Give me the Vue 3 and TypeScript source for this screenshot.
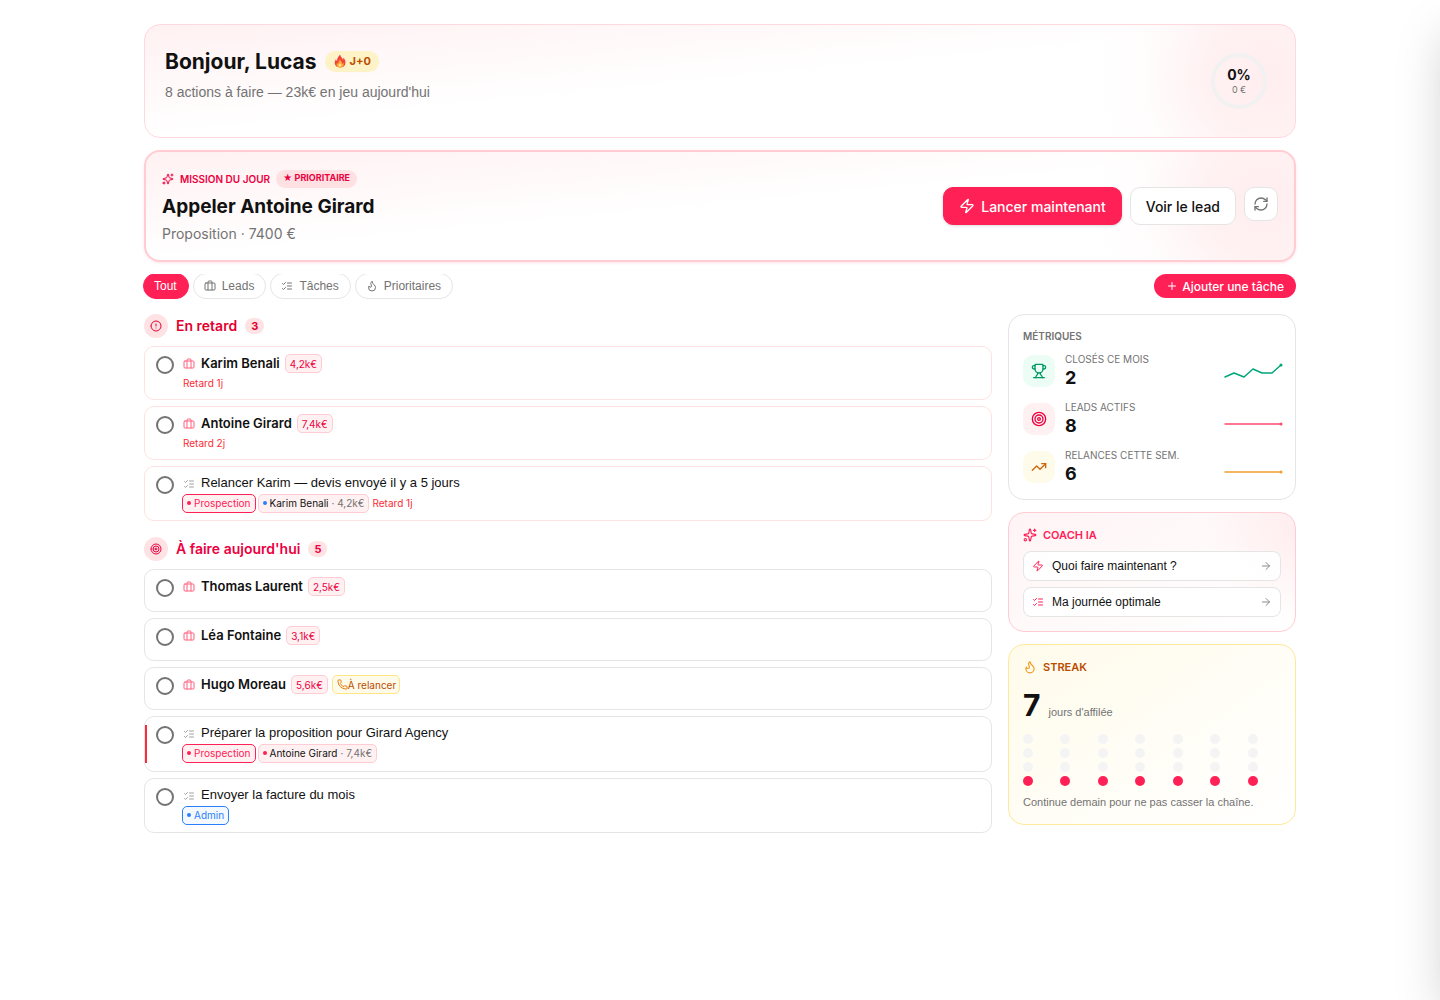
<script setup lang="ts">
import { h, ref, type FunctionalComponent } from 'vue'

const paths: Record<string, string[]> = {
  sparkles: [
    'M11.017 2.814a1 1 0 0 1 1.966 0l1.051 5.558a2 2 0 0 0 1.594 1.594l5.558 1.051a1 1 0 0 1 0 1.966l-5.558 1.051a2 2 0 0 0-1.594 1.594l-1.051 5.558a1 1 0 0 1-1.966 0l-1.051-5.558a2 2 0 0 0-1.594-1.594l-5.558-1.051a1 1 0 0 1 0-1.966l5.558-1.051a2 2 0 0 0 1.594-1.594z',
    'M20 2v4', 'M22 4h-4', 'M2 20a2 2 0 1 0 4 0a2 2 0 1 0-4 0',
  ],
  zap: ['M4 14a1 1 0 0 1-.78-1.63l9.9-10.2a.5.5 0 0 1 .86.46l-1.92 6.02A1 1 0 0 0 13 10h7a1 1 0 0 1 .78 1.63l-9.9 10.2a.5.5 0 0 1-.86-.46l1.92-6.02A1 1 0 0 0 11 14z'],
  refresh: ['M3 12a9 9 0 0 1 9-9 9.75 9.75 0 0 1 6.74 2.74L21 8', 'M21 3v5h-5', 'M21 12a9 9 0 0 1-9 9 9.75 9.75 0 0 1-6.74-2.74L3 16', 'M8 16H3v5'],
  briefcase: ['M16 20V4a2 2 0 0 0-2-2h-4a2 2 0 0 0-2 2v16', 'M4 6h16a2 2 0 0 1 2 2v10a2 2 0 0 1-2 2H4a2 2 0 0 1-2-2V8a2 2 0 0 1 2-2z'],
  list: ['m3 17 2 2 4-4', 'm3 7 2 2 4-4', 'M13 6h8', 'M13 12h8', 'M13 18h8'],
  flame: ['M12 3q1 4 4 6.5t3 5.5a1 1 0 0 1-14 0 5 5 0 0 1 1-3 1 1 0 0 0 5 0c0-2-1.5-3-1.5-5q0-2 2.5-4'],
  alert: ['M2 12a10 10 0 1 0 20 0a10 10 0 1 0-20 0', 'M12 8v4', 'M12 16h.01'],
  target: ['M2 12a10 10 0 1 0 20 0a10 10 0 1 0-20 0', 'M6 12a6 6 0 1 0 12 0a6 6 0 1 0-12 0', 'M10 12a2 2 0 1 0 4 0a2 2 0 1 0-4 0'],
  trophy: [
    'M10 14.66v1.626a2 2 0 0 1-.976 1.696A5 5 0 0 0 7 21.978', 'M14 14.66v1.626a2 2 0 0 0 .976 1.696A5 5 0 0 1 17 21.978',
    'M18 9h1.5a1 1 0 0 0 0-5H18', 'M4 22h16', 'M6 9a6 6 0 0 0 12 0V3a1 1 0 0 0-1-1H7a1 1 0 0 0-1 1z', 'M6 9H4.5a1 1 0 0 1 0-5H6',
  ],
  trend: ['M16 7h6v6', 'm22 7-8.5 8.5-5-5L2 17'],
  arrow: ['M5 12h14', 'm12 5 7 7-7 7'],
  plus: ['M5 12h14', 'M12 5v14'],
  phone: ['M13.832 16.568a1 1 0 0 0 1.213-.303l.355-.465A2 2 0 0 1 17 15h3a2 2 0 0 1 2 2v3a2 2 0 0 1-2 2A18 18 0 0 1 2 4a2 2 0 0 1 2-2h3a2 2 0 0 1 2 2v3a2 2 0 0 1-.8 1.6l-.468.351a1 1 0 0 0-.292 1.233 14 14 0 0 0 6.392 6.384'],
}

const Icon: FunctionalComponent<{ name: string; size: number }> = (props) =>
  h(
    'svg',
    {
      width: props.size, height: props.size, viewBox: '0 0 24 24', fill: 'none', stroke: 'currentColor',
      'stroke-width': 2, 'stroke-linecap': 'round', 'stroke-linejoin': 'round', 'aria-hidden': 'true',
    },
    paths[props.name].map((d) => h('path', { d })),
  )
Icon.props = ['name', 'size']

interface Item {
  id: string
  kind: 'lead' | 'task'
  title: string
  amount?: string
  followUp?: boolean
  category?: string
  tone?: 'rose' | 'blue'
  lead?: { name: string; amount: string; dot: 'rose' | 'blue' }
  late?: string
  priority?: boolean
}
interface Section { title: string; icon: string; late: boolean; items: Item[] }

const sections: Section[] = [
  {
    title: 'En retard', icon: 'alert', late: true,
    items: [
      { id: 'a1', kind: 'lead', title: 'Karim Benali', amount: '4,2k€', late: 'Retard 1j' },
      { id: 'a2', kind: 'lead', title: 'Antoine Girard', amount: '7,4k€', late: 'Retard 2j' },
      {
        id: 'a3', kind: 'task', title: 'Relancer Karim — devis envoyé il y a 5 jours', category: 'Prospection', tone: 'rose',
        lead: { name: 'Karim Benali', amount: '4,2k€', dot: 'blue' }, late: 'Retard 1j',
      },
    ],
  },
  {
    title: "À faire aujourd'hui", icon: 'target', late: false,
    items: [
      { id: 'b1', kind: 'lead', title: 'Thomas Laurent', amount: '2,5k€' },
      { id: 'b2', kind: 'lead', title: 'Léa Fontaine', amount: '3,1k€' },
      { id: 'b3', kind: 'lead', title: 'Hugo Moreau', amount: '5,6k€', followUp: true },
      {
        id: 'b4', kind: 'task', title: 'Préparer la proposition pour Girard Agency', category: 'Prospection', tone: 'rose',
        lead: { name: 'Antoine Girard', amount: '7,4k€', dot: 'rose' }, priority: true,
      },
      { id: 'b5', kind: 'task', title: 'Envoyer la facture du mois', category: 'Admin', tone: 'blue' },
    ],
  },
]

const filters = [
  { label: 'Tout', icon: '' },
  { label: 'Leads', icon: 'briefcase' },
  { label: 'Tâches', icon: 'list' },
  { label: 'Prioritaires', icon: 'flame' },
]
const active = ref('Tout')

const metrics = [
  { label: 'Closés ce mois', value: 2, icon: 'trophy', tone: 'green', points: [[2, 16], [11, 12], [21, 16], [30, 8], [39, 12], [49, 12], [58, 4]] },
  { label: 'Leads actifs', value: 8, icon: 'target', tone: 'rose', points: [[2, 15], [58, 15]] },
  { label: 'Relances cette sem.', value: 6, icon: 'trend', tone: 'amber', points: [[2, 15], [58, 15]] },
]
</script>

<template>
  <main class="page">
    <header class="hero glow">
      <div>
        <div class="hero-line">
          <h1>Bonjour, Lucas</h1>
          <span class="streak-pill">
            <svg width="14" height="14" viewBox="0 0 24 24" aria-hidden="true">
              <path fill="#f4433c" d="M12 1c1 4 4 5 5 9 .8-1 .8-2.500.5-4C21 9 22 13 21 17c-1 4-4 6-9 6s-8.500-2-9-7c-.3-3 1-5 2-7 .3 1.500.8 2.500 2 3C6.500 8 9 5 12 1z" />
              <path fill="#ffb02e" d="M12 9c.5 3 4 4.500 4 8.500 1-.5 1.500-1.500 1.500-3C20 19 17 23 12 23s-7-4-5-8c.5 1 1 1.500 2 2-.5-3 2-5 3-8z" />
              <path fill="#fff3c4" d="M12 16c1 1.500 2 2.500 1.500 4.500-.5 1.500-2.500 1.500-3 0-.5-1.500.5-3 1.500-4.500z" />
            </svg>
            J+0
          </span>
        </div>
        <p class="lead-text">8 actions à faire — 23k€ en jeu aujourd'hui</p>
      </div>
      <div class="ring">
        <svg width="72" height="72" viewBox="0 0 72 72" aria-hidden="true">
          <circle cx="36" cy="36" r="26" fill="none" stroke="#f2f1f1" stroke-width="4" />
        </svg>
        <div class="ring-label"><strong>0%</strong><span>0 €</span></div>
      </div>
    </header>

    <section class="mission glow">
      <div class="mission-text">
        <div class="eyebrow">
          <Icon name="sparkles" :size="12" />
          <span>MISSION DU JOUR</span>
          <span class="prio">★ PRIORITAIRE</span>
        </div>
        <h2>Appeler Antoine Girard</h2>
        <p class="stage">Proposition · 7400 €</p>
      </div>
      <div class="actions">
        <button class="btn primary" type="button"><Icon name="zap" :size="16" />Lancer maintenant</button>
        <button class="btn" type="button">Voir le lead</button>
        <button class="btn square" type="button" aria-label="Changer de mission"><Icon name="refresh" :size="16" /></button>
      </div>
    </section>

    <nav class="toolbar" aria-label="Filtres">
      <div class="chips">
        <button
          v-for="f in filters" :key="f.label" type="button" class="chip" :class="{ on: active === f.label }"
          :aria-pressed="active === f.label" @click="active = f.label"
        >
          <Icon v-if="f.icon" :name="f.icon" :size="12" />{{ f.label }}
        </button>
      </div>
      <button class="add" type="button"><Icon name="plus" :size="12" />Ajouter une tâche</button>
    </nav>

    <div class="columns">
      <div class="lists">
        <section v-for="s in sections" :key="s.title" class="group">
          <h3 :class="{ late: s.late }">
            <span class="disc"><Icon :name="s.icon" :size="12" /></span>
            <span class="group-title">{{ s.title }}</span>
            <span class="count">{{ s.items.length }}</span>
          </h3>
          <ul>
            <li v-for="it in s.items" :key="it.id" class="item" :class="{ late: s.late, priority: it.priority }">
              <input :id="it.id" type="checkbox" />
              <div class="body">
                <div class="title-row">
                  <Icon :name="it.kind === 'lead' ? 'briefcase' : 'list'" :size="12" :class="it.kind" />
                  <label :for="it.id" :class="{ strong: it.kind === 'lead' }">{{ it.title }}</label>
                  <span v-if="it.amount" class="tag amount">{{ it.amount }}</span>
                  <span v-if="it.followUp" class="tag follow"><Icon name="phone" :size="11" />À relancer</span>
                </div>
                <div v-if="it.category || it.late" class="meta" :class="{ tagged: it.category }">
                  <span v-if="it.category" class="tag category" :class="it.tone"><i class="dot"></i>{{ it.category }}</span>
                  <span v-if="it.lead" class="tag linked">
                    <i class="dot" :class="it.lead.dot"></i>{{ it.lead.name }}<em>· {{ it.lead.amount }}</em>
                  </span>
                  <span v-if="it.late" class="late-text">{{ it.late }}</span>
                </div>
              </div>
            </li>
          </ul>
        </section>
      </div>

      <aside>
        <section class="card">
          <h4>MÉTRIQUES</h4>
          <div class="metrics">
            <div v-for="m in metrics" :key="m.label" class="metric" :class="m.tone">
              <span class="tile"><Icon :name="m.icon" :size="16" /></span>
              <div class="figures">
                <span class="metric-label">{{ m.label }}</span>
                <strong>{{ m.value }}</strong>
              </div>
              <svg class="spark" width="60" height="20" viewBox="0 0 60 20" aria-hidden="true">
                <polyline :points="m.points.map((p) => p.join(',')).join(' ')" />
                <circle :cx="m.points[m.points.length - 1][0]" :cy="m.points[m.points.length - 1][1]" r="1.500" />
              </svg>
            </div>
          </div>
        </section>

        <section class="card coach">
          <h4><Icon name="sparkles" :size="14" />COACH IA</h4>
          <div class="asks">
            <button type="button"><Icon name="zap" :size="12" /><span>Quoi faire maintenant ?</span><Icon name="arrow" :size="12" /></button>
            <button type="button"><Icon name="list" :size="12" /><span>Ma journée optimale</span><Icon name="arrow" :size="12" /></button>
          </div>
        </section>

        <section class="card streak">
          <h4><Icon name="flame" :size="14" />STREAK</h4>
          <p class="days"><strong>7</strong>jours d'affilée</p>
          <div class="dots"><i v-for="n in 28" :key="n" :class="{ done: n > 21 }"></i></div>
          <p class="hint">Continue demain pour ne pas casser la chaîne.</p>
        </section>
      </aside>
    </div>
  </main>
  <div class="drawer"></div>
</template>

<style>
body {
  margin: 0;
  background: #fff;
}
</style>

<style scoped>
.page {
  box-sizing: border-box;
  max-width: 1152px;
  margin: 0 auto;
  padding: 24px 0;
  display: flex;
  flex-direction: column;
  gap: 12px;
  font-family: Inter, "Liberation Sans", sans-serif;
  color: #111;
}
.page * { box-sizing: border-box; }
h1, h2, h3, h4, p, ul { margin: 0; padding: 0; }
button { font-family: inherit; cursor: pointer; }
svg { flex: none; display: block; }
.lead-text, .chip, .title-row label, .asks button, .hint, .days {
  font-family: "Liberation Sans", Arial, sans-serif;
}
.drawer {
  position: fixed;
  top: 0;
  bottom: 0;
  left: 100%;
  width: 420px;
  box-shadow: 0 25px 50px -12px rgba(0, 0, 0, 0.25);
}
.hero {
  display: flex;
  justify-content: space-between;
  border: 1px solid #ffd9de;
  border-radius: 16px;
  padding: 20px;
}
.glow {
  background:
    radial-gradient(circle at calc(100% - 30px) 45%, rgba(255, 228, 230, 0.65) 0, rgba(255, 228, 230, 0.5) 60px, rgba(255, 228, 230, 0.1) 120px, rgba(255, 228, 230, 0) 170px),
    linear-gradient(to bottom right, #fff1f2 0%, #fff 50%);
}
.hero-line { display: flex; align-items: center; gap: 8px; height: 32px; }
h1 { padding-top: 2px; font-size: 21px; line-height: 30px; font-weight: 700; }
.streak-pill {
  display: flex;
  align-items: center;
  gap: 3px;
  height: 21px;
  padding: 0 8px;
  border-radius: 11px;
  background: #fef3c6;
  color: #bb4d00;
  font-size: 11px;
  font-weight: 700;
}
.lead-text, .stage { font-size: 14px; line-height: 20px; color: #737373; }
.lead-text { margin-top: 5px; }
.ring { position: relative; width: 72px; height: 72px; }
.ring-label {
  position: absolute;
  inset: 0;
  display: flex;
  flex-direction: column;
  align-items: center;
  justify-content: center;
  gap: 1px;
  padding-top: 1px;
}
.ring-label strong { font-size: 14px; line-height: 16px; font-weight: 700; }
.ring-label span { font-size: 9px; line-height: 12px; color: #737373; }
.mission {
  display: flex;
  align-items: center;
  justify-content: space-between;
  padding: 16px;
  border: 2px solid #ffccd3;
  border-radius: 16px;
  box-shadow: 0 1px 3px rgba(255, 32, 86, 0.12);
  background-clip: padding-box;
}
.mission-text { display: flex; flex-direction: column; gap: 4px; }
.eyebrow {
  display: flex;
  align-items: center;
  gap: 6px;
  height: 20px;
  padding-top: 2px;
  font-size: 10px;
  font-weight: 600;
  color: #ec003f;
}
.prio {
  height: 18px;
  padding: 0 7px;
  border-radius: 9px;
  background: #ffe0e3;
  font-size: 9px;
  line-height: 16px;
  font-weight: 700;
}
h2 { padding-top: 2px; font-size: 19px; line-height: 26px; font-weight: 700; }
.actions { display: flex; align-items: flex-start; gap: 8px; }
.btn {
  display: flex;
  align-items: center;
  justify-content: center;
  gap: 6px;
  height: 38px;
  padding: 0 15px;
  border: 1px solid #e5e5e5;
  border-radius: 10px;
  background: #fff;
  color: #111;
  font-size: 14px;
  font-weight: 500;
}
.btn.primary { border-color: #ff2056; background: #ff2056; color: #fff; box-shadow: 0 1px 3px rgba(0, 0, 0, 0.15); }
.btn.square { width: 34px; height: 34px; padding: 0; color: #737373; }
.toolbar { display: flex; justify-content: space-between; align-items: flex-start; }
.chips { display: flex; gap: 4px; margin-left: -1px; overflow: hidden; }
.chip {
  display: flex;
  align-items: center;
  gap: 6px;
  height: 26px;
  margin-top: -1px;
  padding: 0 11px 0 10px;
  border: 1px solid #e5e5e5;
  border-radius: 13px;
  background: #fff;
  color: #737373;
  font-size: 12px;
}
.chip.on { border-color: #ff2056; background: #ff2056; color: #fff; }
.add {
  display: flex;
  align-items: center;
  gap: 4px;
  height: 24px;
  padding: 0 12px;
  border: 0;
  border-radius: 12px;
  background: #ff2056;
  color: #fff;
  font-size: 12px;
  font-weight: 500;
}
.columns { display: grid; grid-template-columns: minmax(0, 1fr) 288px; gap: 16px; align-items: start; margin-top: 3px; }
.lists { display: flex; flex-direction: column; gap: 16px; }
h3 {
  display: flex;
  align-items: center;
  gap: 8px;
  height: 24px;
  margin-bottom: 8px;
  font-size: 14px;
  font-weight: 600;
  color: #ec003f;
}
h3.late { color: #e3002f; }
.group-title { padding-bottom: 2px; }
.disc {
  display: grid;
  place-items: center;
  width: 24px;
  height: 24px;
  border-radius: 50%;
  background: #ffe2e4;
}
.count { padding: 0 6px; border-radius: 8px; background: #ffe2e4; font-size: 11px; line-height: 16px; font-weight: 700; }
ul { list-style: none; display: flex; flex-direction: column; gap: 6px; }
.item {
  position: relative;
  display: flex;
  gap: 9px;
  min-height: 43px;
  padding: 7px 11px;
  border: 1px solid #e5e5e5;
  border-radius: 10px;
  background: #fff;
}
.item.late { border-color: #ffe2e2; }
.item.priority { min-height: 56px; }
.item.priority::before {
  content: "";
  position: absolute;
  left: 0;
  top: 8px;
  bottom: 8px;
  width: 2px;
  background: #fb2c36;
}
.item input {
  appearance: none;
  flex: none;
  width: 18px;
  height: 18px;
  margin: 2px 0 0;
  border: 2px solid #737373;
  border-radius: 50%;
}
.item input:checked { background: #ff2056; }
.body { min-width: 0; }
.title-row { display: flex; align-items: center; height: 19px; }
.title-row .lead { color: #ff637e; }
.title-row .task { color: #a1a1a1; }
.title-row label { margin-left: 6px; padding-bottom: 2px; font-size: 13px; line-height: 17px; }
.title-row label.strong { padding-bottom: 0; font-family: Inter, "Liberation Sans", sans-serif; font-weight: 600; }
.tag {
  display: inline-flex;
  align-items: center;
  gap: 4px;
  height: 19px;
  padding: 0 4px;
  border: 1px solid #ffccd3;
  border-radius: 5px;
  background: #fff1f2;
  font-size: 10px;
  white-space: nowrap;
}
.amount { margin-left: 5px; color: #ec003f; }
.follow { gap: 0; padding-right: 3px; margin-left: 4px; border-color: #fee685; background: #fffbeb; color: #bb4d00; }
.follow svg { color: #e17100; }
.meta { display: flex; align-items: center; gap: 2px; height: 19px; }
.meta.tagged { height: 20px; }
.dot { width: 4px; height: 4px; border-radius: 50%; background: currentColor; }
.dot.rose { background: #ff2056; }
.dot.blue { background: #2b7fff; }
.category, .linked { gap: 3px; }
.category { margin-left: -1px; }
.category.rose { border-color: #ff2056; color: #ff2056; }
.category.blue { border-color: #2b7fff; background: #f3f9fd; color: #2b7fff; }
.linked em { font-style: normal; color: #737373; }
.late-text { margin-left: 1px; font-size: 10px; color: #fb2c36; }
.late-text:first-child { margin-left: 0; }
aside { display: flex; flex-direction: column; gap: 12px; }
.card { padding: 14px; border: 1px solid #e5e5e5; border-radius: 16px; background: #fff; }
h4 { display: flex; align-items: center; gap: 6px; height: 16px; font-size: 11px; font-weight: 600; }
.card:first-child h4 { padding-bottom: 2px; font-size: 10px; color: #737373; }
.metrics { display: flex; flex-direction: column; gap: 12px; margin-top: 8px; }
.metric { display: flex; align-items: center; height: 36px; }
.tile { display: grid; place-items: center; width: 32px; height: 32px; border-radius: 10px; }
.green { color: #00a57a; }
.green .tile { background: #ecfdf5; color: #009966; }
.metric.rose { color: #ff4a70; }
.metric.rose .tile { background: #fff1f2; color: #ec003f; }
.amber { color: #f0a030; }
.amber .tile { background: #fffbeb; color: #d0660a; }
.figures { flex: 1; display: flex; flex-direction: column; margin-left: 10px; }
.metric-label { font-size: 10px; line-height: 13px; color: #737373; text-transform: uppercase; }
.figures strong { font-size: 18px; line-height: 23px; font-weight: 700; color: #111; }
.spark { margin-right: -2px; }
.spark polyline { fill: none; stroke: currentColor; stroke-width: 1.500; stroke-linejoin: round; stroke-linecap: round; }
.spark circle { fill: currentColor; }
.coach {
  border-color: #ffccd3;
  background:
    radial-gradient(circle at 100% 16px, rgba(255, 228, 230, 0.6) 0, rgba(255, 228, 230, 0) 90px),
    linear-gradient(150deg, #fff4f5, #fff);
}
.coach h4 { color: #ff2056; }
.asks { display: flex; flex-direction: column; gap: 6px; margin-top: 8px; }
.asks button {
  display: flex;
  align-items: center;
  gap: 8px;
  height: 30px;
  padding: 0 8px;
  border: 1px solid #e5e5e5;
  border-radius: 8px;
  background: rgba(255, 255, 255, 0.9);
  color: #ff2056;
  font-size: 12px;
}
.asks span { flex: 1; text-align: left; color: #111; }
.asks svg:last-child { color: #8c8c8c; }
.streak { border-color: #fee99a; background: linear-gradient(145deg, #fffbeb, #fff); }
.streak h4 { color: #bb4d00; }
.streak h4 svg { color: #f09a1e; }
.days { display: flex; align-items: baseline; gap: 8px; height: 36px; margin-top: 12px; font-size: 11px; line-height: 16px; color: #737373; }
.days strong { font-family: Inter, "Liberation Sans", sans-serif; font-size: 30px; line-height: 36px; font-weight: 700; color: #111; }
.dots { display: grid; grid-template-columns: repeat(7, 1fr); gap: 4px; margin-top: 11px; }
.dots i { width: 10px; height: 10px; border-radius: 50%; background: #f4f4f5; }
.dots .done { background: #ff2056; }
.hint { margin-top: 8px; font-size: 11px; line-height: 16px; color: #737373; }
</style>
